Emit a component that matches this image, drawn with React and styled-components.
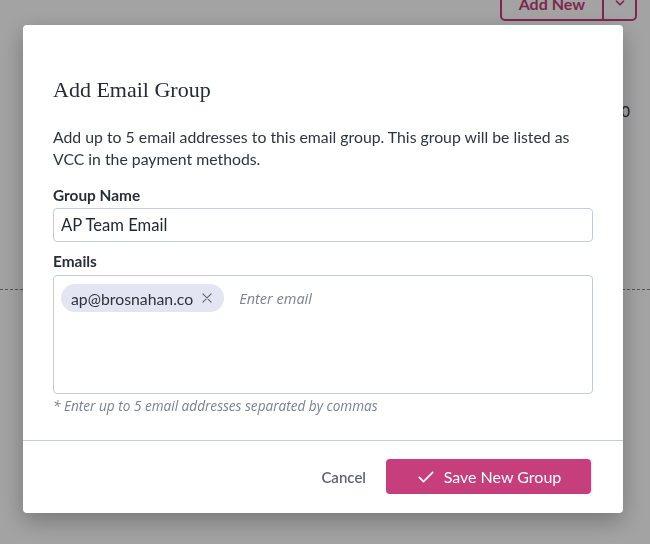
import React, { useState } from "react";
import styled, { createGlobalStyle } from "styled-components";

const GlobalStyle = createGlobalStyle`
  html, body {
    margin: 0;
    padding: 0;
    background: #ffffff;
    font-family: Lato, "Noto Sans", sans-serif;
    color: #2c313c;
  }
  * { box-sizing: border-box; }
`;

const Page = styled.div`
  width: 650px;
  height: 544px;
  overflow: hidden;
  background: #ffffff;
`;

const TopBar = styled.div`
  display: flex;
  justify-content: flex-end;
  padding-right: 13px;
  margin-top: -15px;
`;

const SplitButton = styled.div`
  display: flex;
  height: 36px;
  border: 2px solid #c63e7b;
  border-radius: 5px;
`;

const SplitMain = styled.span`
  display: flex;
  align-items: center;
  justify-content: center;
  padding: 0 17px;
  white-space: nowrap;
  font-size: 16px;
  font-weight: 700;
  color: #c63e7b;
`;

const SplitArrow = styled.span`
  display: flex;
  align-items: center;
  justify-content: center;
  width: 33px;
  border-left: 2px solid #c63e7b;
  color: #c63e7b;
`;

const StatRow = styled.div`
  display: flex;
  justify-content: flex-end;
  padding: 81px 20px 0 0;
  font-size: 15px;
  color: #333;
`;

const DashedRule = styled.div`
  margin-top: 169px;
  border-top: 1px dashed #888;
`;

const Overlay = styled.div`
  position: fixed;
  inset: 0;
  background: rgba(0, 0, 0, 0.36);
  display: flex;
  align-items: flex-start;
  padding: 25px 0 0 23px;
`;

const Modal = styled.div`
  width: 600px;
  height: 488px;
  background: #ffffff;
  border-radius: 4px;
  box-shadow: 0 8px 24px rgba(0, 0, 0, 0.28);
  display: flex;
  flex-direction: column;
`;

const Body = styled.div`
  padding: 51px 30px 0 30px;
  flex: 1;
  display: flex;
  flex-direction: column;
`;

const Title = styled.h2`
  margin: 0;
  font-family: "Liberation Serif", "DejaVu Serif", serif;
  font-weight: 400;
  font-size: 22px;
  line-height: 28px;
  color: #262a32;
`;

const Description = styled.p`
  margin: 22px 0 0 0;
  font-size: 15.8px;
  line-height: 22px;
  color: #2f343e;
  padding-right: 12px;
`;

const Label = styled.label`
  display: block;
  font-size: 15.4px;
  font-weight: 700;
  line-height: 20px;
  color: #2a2e38;
  margin-top: ${(p) => p.$top}px;
`;

const TextInput = styled.input`
  margin-top: 3px;
  width: 100%;
  height: 34px;
  border: 1px solid #c6ccd6;
  border-radius: 4px;
  padding: 0 7px;
  font-family: inherit;
  font-size: 16.6px;
  color: #23272f;
  outline: none;
`;

const EmailBox = styled.div`
  margin-top: 4px;
  height: 119px;
  border: 1px solid #c6ccd6;
  border-radius: 4px;
  padding: 8px 7px;
  display: flex;
  flex-wrap: wrap;
  align-content: flex-start;
  align-items: center;
  gap: 15px;
`;

const Chip = styled.span`
  display: inline-flex;
  align-items: center;
  height: 28px;
  padding: 0 10px;
  gap: 7px;
  border-radius: 14px;
  background: #e3e6f2;
  font-size: 15.8px;
  color: #2e333d;
`;

const ChipClose = styled.button`
  border: none;
  background: none;
  padding: 0;
  display: flex;
  align-items: center;
  color: #5f6676;
  cursor: pointer;
`;

const EmailInput = styled.input`
  border: none;
  outline: none;
  flex: 1;
  font-family: "Open Sans", Lato, sans-serif;
  font-size: 14.5px;
  height: 28px;
  padding: 0;
  &::placeholder {
    font-style: italic;
    color: #7b8292;
  }
`;

const Hint = styled.p`
  margin: 4px 0 0 0;
  font-family: "Open Sans", Lato, sans-serif;
  font-size: 13.6px;
  line-height: 16px;
  font-style: italic;
  color: #7a8190;
`;

const Footer = styled.div`
  border-top: 1px solid #c6ccd6;
  padding: 18px 32px 19px 0;
  display: flex;
  justify-content: flex-end;
  align-items: center;
  gap: 20px;
`;

const CancelButton = styled.button`
  border: none;
  background: none;
  font-family: inherit;
  font-size: 15px;
  font-weight: 600;
  color: #5c6477;
  padding: 0;
  cursor: pointer;
`;

const PrimaryButton = styled.button`
  display: flex;
  align-items: center;
  justify-content: center;
  gap: 8px;
  width: 205px;
  height: 35px;
  border: none;
  border-radius: 4px;
  background: #c63e7b;
  color: #ffffff;
  font-family: inherit;
  font-size: 16px;
  cursor: pointer;
`;

export default function App() {
  const [name, setName] = useState("AP Team Email");
  const [emails, setEmails] = useState(["ap@brosnahan.co"]);

  return (
    <>
      <GlobalStyle />
      <Page>
        <TopBar>
          <SplitButton>
            <SplitMain>Add New</SplitMain>
            <SplitArrow>
              <svg width="14" height="14" viewBox="0 0 24 24" fill="none" stroke="currentColor" strokeWidth="3" strokeLinecap="round" strokeLinejoin="round">
                <path d="M6 9l6 6 6-6" />
              </svg>
            </SplitArrow>
          </SplitButton>
        </TopBar>
        <StatRow>0</StatRow>
        <DashedRule />
      </Page>
      <Overlay>
        <Modal>
          <Body>
            <Title>Add Email Group</Title>
            <Description>
              Add up to 5 email addresses to this email group. This group will be listed as VCC in the payment methods.
            </Description>
            <Label $top={15}>Group Name</Label>
            <TextInput value={name} onChange={(e) => setName(e.target.value)} />
            <Label $top={9}>Emails</Label>
            <EmailBox>
              {emails.map((em) => (
                <Chip key={em}>
                  {em}
                  <ChipClose onClick={() => setEmails(emails.filter((x) => x !== em))}>
                    <svg width="14" height="14" viewBox="0 0 24 24" fill="none" stroke="currentColor" strokeWidth="2" strokeLinecap="round">
                      <path d="M5 5l14 14M19 5L5 19" />
                    </svg>
                  </ChipClose>
                </Chip>
              ))}
              <EmailInput placeholder="Enter email" />
            </EmailBox>
            <Hint>* Enter up to 5 email addresses separated by commas</Hint>
          </Body>
          <Footer>
            <CancelButton>Cancel</CancelButton>
            <PrimaryButton>
              <svg width="20" height="20" viewBox="0 0 24 24" fill="none" stroke="currentColor" strokeWidth="2" strokeLinecap="round" strokeLinejoin="round">
                <path d="M4 12.5l5 5L20 6.5" />
              </svg>
              Save New Group
            </PrimaryButton>
          </Footer>
        </Modal>
      </Overlay>
    </>
  );
}
